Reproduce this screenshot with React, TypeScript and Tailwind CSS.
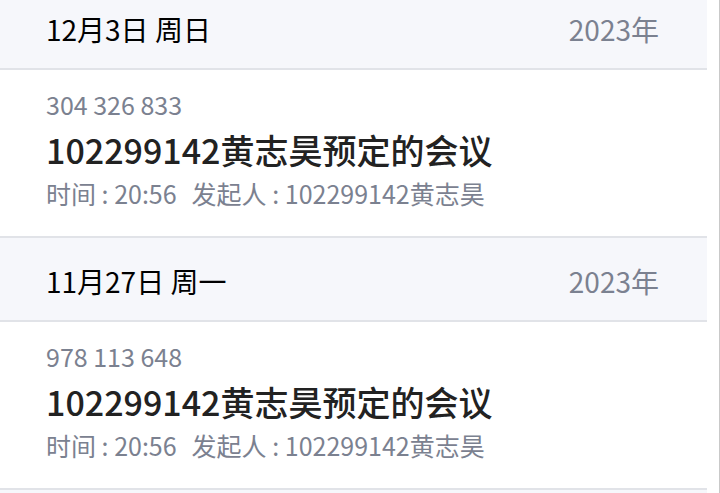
import React from "react";

const meetings = [
  {
    date: "12月3日 周日",
    year: "2023年",
    id: "304 326 833",
    title: "102299142黄志昊预定的会议",
    time: "20:56",
    host: "102299142黄志昊",
  },
  {
    date: "11月27日 周一",
    year: "2023年",
    id: "978 113 648",
    title: "102299142黄志昊预定的会议",
    time: "20:56",
    host: "102299142黄志昊",
  },
];

export default function App() {
  return (
    <div
      className="flex h-[493px] w-[720px] overflow-hidden bg-white border-r border-[#c9c9c9]"
      style={{ fontFamily: '"Noto Sans CJK SC", "Noto Sans", sans-serif' }}
    >
      <div className="w-[707px] -mt-[14px]">
        {meetings.map((m) => (
          <div key={m.id}>
            <div className="flex h-[84px] items-center justify-between border-b-2 border-[#e1e3e8] bg-[#f6f7fb] pl-[46px] pr-[48px] pt-[4px]">
              <span className="text-[28px] text-black">{m.date}</span>
              <span className="text-[28px] text-[#7b8190]">{m.year}</span>
            </div>
            <div className="flex h-[168px] flex-col border-b-2 border-[#e1e3e8] bg-white pl-[46px] pt-[14px]">
              <div className="text-[25px] leading-[40px] text-[#7b8190]">{m.id}</div>
              <div className="text-[34px] font-medium leading-[52px] text-[#222222]">
                {m.title}
              </div>
              <div className="text-[25px] leading-[34px] text-[#7b8190]">
                时间 : {m.time}
                <span className="ml-[15px]">发起人 : {m.host}</span>
              </div>
            </div>
          </div>
        ))}
        <div className="h-[84px] bg-[#f6f7fb]" />
      </div>
    </div>
  );
}
